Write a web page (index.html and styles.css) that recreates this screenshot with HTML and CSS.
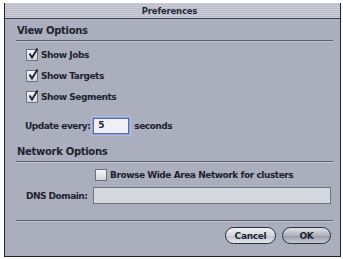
FILE: index.html
```html
<!DOCTYPE html>
<html>
<head>
<meta charset="utf-8">
<link rel="stylesheet" href="styles.css">
</head>
<body>
<div class="window">
  <div class="titlebar">Preferences</div>
  <div class="content">
    <div class="section-title">View Options</div>
    <div class="rule"></div>
    <div class="checks">
      <label class="check"><span class="box"><svg viewBox="0 0 12 12" width="12" height="12"><path d="M2.5 5.5 L5 9.5 L10.5 0.5" fill="none" stroke="#1c1f2a" stroke-width="1.8"/></svg></span>Show Jobs</label>
      <label class="check"><span class="box"><svg viewBox="0 0 12 12" width="12" height="12"><path d="M2.5 5.5 L5 9.5 L10.5 0.5" fill="none" stroke="#1c1f2a" stroke-width="1.8"/></svg></span>Show Targets</label>
      <label class="check"><span class="box"><svg viewBox="0 0 12 12" width="12" height="12"><path d="M2.5 5.5 L5 9.5 L10.5 0.5" fill="none" stroke="#1c1f2a" stroke-width="1.8"/></svg></span>Show Segments</label>
    </div>
    <div class="update">
      <span class="label">Update every:</span>
      <span class="input small">5</span>
      <span class="label">seconds</span>
    </div>
    <div class="section-title net">Network Options</div>
    <div class="rule"></div>
    <div class="browse">
      <label class="check"><span class="box"></span>Browse Wide Area Network for clusters</label>
    </div>
    <div class="dns">
      <span class="label dns-label">DNS Domain:</span>
      <span class="input wide"></span>
    </div>
    <div class="rule bottom"></div>
    <div class="buttons">
      <span class="btn">Cancel</span>
      <span class="btn default">OK</span>
    </div>
  </div>
</div>
</body>
</html>
```

FILE: styles.css
```css
html, body {
  margin: 0;
  padding: 0;
  background: #ffffff;
}
body {
  font-family: "DejaVu Sans", sans-serif;
  font-weight: bold;
  color: #1e2230;
}
.window {
  margin: 3px 0 0 4px;
  width: 335px;
  height: 253px;
  border: 1px solid #1f2330;
  border-top: none;
  background: #abaebc;
}
.titlebar {
  height: 15px;
  border-bottom: 1px solid #3b3f4c;
  background: repeating-linear-gradient(to bottom, #cbced6 0, #cbced6 1px, #b9bcc6 1px, #b9bcc6 2px);
  text-align: center;
  font-size: 8.5px;
  letter-spacing: -0.2px;
  line-height: 16px;
  padding-right: 6px;
  color: #262a36;
}
.content {
  padding: 5px 7px 0 11px;
}
.section-title {
  font-size: 10px;
  letter-spacing: -0.3px;
  line-height: 14px;
  padding-left: 1px;
}
.section-title.net {
  margin-top: 11px;
}
.rule {
  height: 1px;
  background: #5c606c;
  margin-top: 2px;
  border-bottom: 1px solid #c3c6cf;
}
.checks {
  display: flex;
  flex-direction: column;
  gap: 9px;
  padding: 7px 0 0 10px;
}
.check {
  display: flex;
  align-items: center;
  gap: 3px;
  font-size: 9px;
  letter-spacing: -0.45px;
  line-height: 12px;
}
.box {
  width: 10px;
  height: 10px;
  border: 1px solid #6c707c;
  background: linear-gradient(#f4f5f8, #d3d6de);
  position: relative;
  flex: none;
}
.box svg {
  position: absolute;
  left: 0;
  top: -2px;
}
.update {
  display: flex;
  align-items: center;
  margin-top: 15px;
  padding-left: 9px;
}
.label {
  font-size: 9px;
  letter-spacing: -0.5px;
}
.input {
  display: inline-block;
  background: #e3e5ec;
  border: 1px solid #6f7380;
  box-sizing: border-box;
  font-size: 9px;
  padding-left: 4px;
  line-height: 13px;
}
.input.small {
  width: 36px;
  height: 16px;
  margin: 0 5px 0 3px;
  border-color: #5b6a9e;
  box-shadow: 0 0 0 1px #8fa0d6, 0 0 0 2px #b1bde0;
  background: #eef0f5;
}
.browse {
  padding: 6px 0 0 79px;
}
.dns {
  display: flex;
  align-items: center;
  margin-top: 6px;
  padding-left: 10px;
}
.dns-label {
  width: 67px;
  flex: none;
}
.input.wide {
  width: 238px;
  height: 17px;
  background: #d6d8e0;
}
.rule.bottom {
  margin-top: 16px;
}
.buttons {
  display: flex;
  justify-content: flex-end;
  gap: 6px;
  margin-top: 5px;
  padding-right: 2px;
}
.btn {
  display: inline-flex;
  align-items: center;
  justify-content: center;
  height: 15px;
  border: 1px solid #2a2e3a;
  border-radius: 9px;
  background: linear-gradient(#f0f1f5 0%, #d4d7df 50%, #bfc3cc 51%, #e6e8ee 100%);
  font-size: 9px;
  letter-spacing: -0.3px;
  width: 49px;
}
.btn.default {
  width: 47px;
  background: linear-gradient(#dfe1e7 0%, #aeb2bc 50%, #979ba6 51%, #c8cbd3 100%);
}
```
